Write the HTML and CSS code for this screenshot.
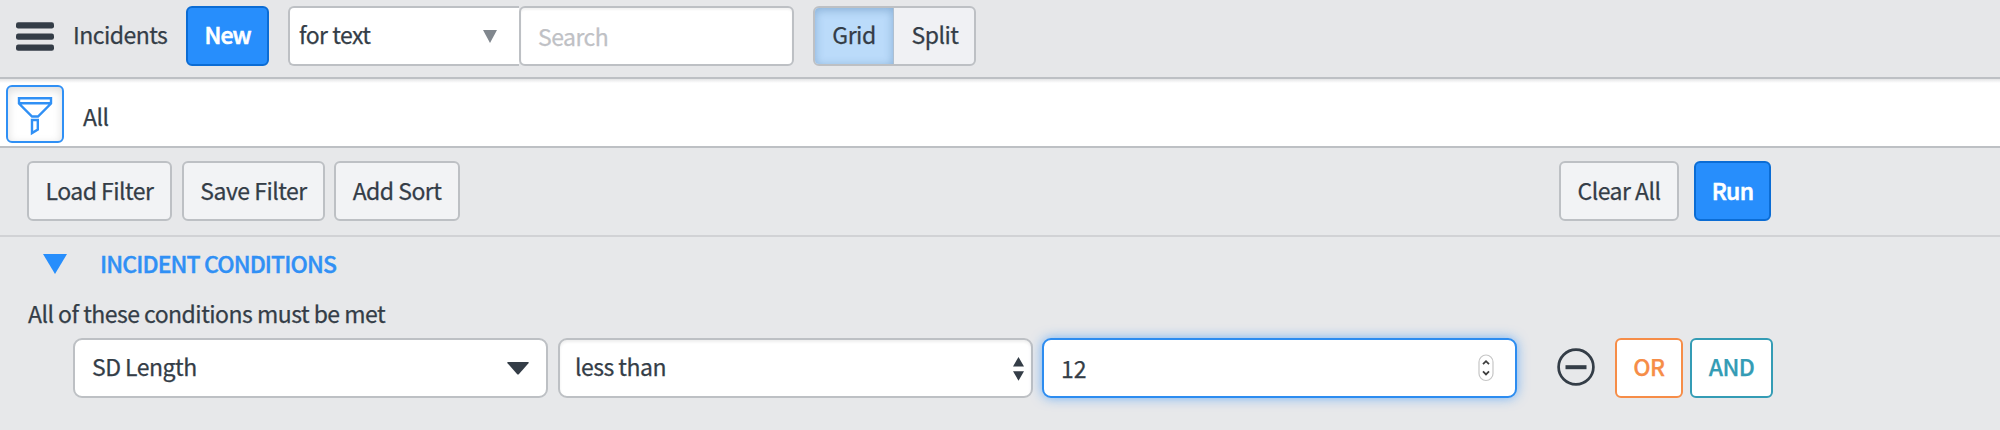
FILE: index.html
```html
<!DOCTYPE html>
<html lang="en">
<head>
<meta charset="utf-8">
<title>Incidents</title>
<link rel="stylesheet" href="styles.css">
</head>
<body>
<header class="toolbar">
  <svg class="menu" width="38" height="30" viewBox="0 0 38 30"><g fill="#343d47"><rect y="0.3" width="38" height="6.2" rx="2.2"/><rect y="11.5" width="38" height="6.2" rx="2.2"/><rect y="22.6" width="38" height="6.2" rx="2.2"/></g></svg>
  <span class="title">Incidents</span>
  <div class="btn primary new">New</div>
  <div class="search-group">
    <div class="kind"><span>for text</span><svg width="14" height="13" viewBox="0 0 14 13"><path d="M0 0H14L7 13Z" fill="#81878e"/></svg></div>
    <div class="search">Search</div>
  </div>
  <div class="toggle">
    <div class="grid">Grid</div>
    <div class="split">Split</div>
  </div>
</header>
<nav class="crumbs">
  <div class="funnel"><svg width="36" height="40" viewBox="0 0 36 40" fill="none" stroke="#3090f5" stroke-width="2.4"><path d="M2 2.2H34V7.5L21 20.5H15L2 7.5ZM2 7.2H34"/><path d="M15 24H20.8V33.5L15 37Z"/></svg></div>
  <span>All</span>
</nav>
<section class="actions">
  <div class="btn load">Load Filter</div>
  <div class="btn save">Save Filter</div>
  <div class="btn sort">Add Sort</div>
  <div class="btn clear">Clear All</div>
  <div class="btn primary run">Run</div>
</section>
<main class="conditions">
  <div class="heading">
    <svg width="24" height="20" viewBox="0 0 24 20"><path d="M0 0H24L12 20Z" fill="#278efc"/></svg>
    <span>INCIDENT CONDITIONS</span>
  </div>
  <p class="hint">All of these conditions must be met</p>
  <div class="row">
    <div class="field"><span>SD Length</span><svg class="caret" width="22" height="13" viewBox="0 0 22 13"><path d="M1 0H21Q22.5 0 21.5 1.2L12 12Q11 13 10 12L0.5 1.2Q-0.5 0 1 0Z" fill="#343d47"/></svg></div>
    <div class="field operator"><span>less than</span><svg class="updown" width="11" height="24" viewBox="0 0 11 24"><path d="M0 9.5L5.5 0L11 9.5ZM0 14.2H11L5.5 23.7Z" fill="#343d47"/></svg></div>
    <div class="field value"><span>12</span><svg class="stepper" width="16" height="28" viewBox="0 0 16 28" fill="none"><rect x="1" y="1" width="14" height="25.5" rx="7" stroke="#c6c6c6" stroke-width="1.2" fill="#fff"/><path d="M5 10.2L8 7.2L11 10.2M5 17.4L8 20.4L11 17.4" stroke="#3e3e3e" stroke-width="1.8"/></svg></div>
    <svg class="remove" width="38" height="38" viewBox="0 0 38 38"><circle cx="19" cy="19" r="17.4" fill="none" stroke="#343d47" stroke-width="2.7"/><rect x="8.5" y="17.2" width="21" height="4" fill="#343d47"/></svg>
    <div class="logic or">OR</div>
    <div class="logic and">AND</div>
  </div>
</main>
</body>
</html>
```
FILE: styles.css
```css
* { box-sizing: border-box; }
body {
  margin: 0;
  width: 2000px;
  height: 430px;
  overflow: hidden;
  background: #e7e8ea;
  color: #343d47;
  font: 23px/30px "Noto Sans CJK SC", "Noto Sans", sans-serif;
  letter-spacing: -0.52px;
  -webkit-text-stroke: 0.25px currentColor;
  white-space: nowrap;
}
svg { display: block; flex: none; }
.toolbar {
  display: flex;
  height: 79px;
  padding: 6px 0 0 16px;
  background: #e6e7e9;
  border-bottom: 2px solid #bdc0c4;
}
.menu { margin-top: 16px; }
.title { width: 113px; margin: 13px 0 0 19px; }
.btn {
  display: flex;
  align-items: center;
  justify-content: center;
  height: 60px;
  padding-bottom: 3px;
  background: #f2f3f5;
  border: 2px solid #bdc0c4;
  border-radius: 6px;
}
.primary {
  background: #278efc;
  border-color: #0b6cd4;
  color: #fff;
  font-weight: 500;
  -webkit-text-stroke-width: 0.6px;
}
.new { width: 83px; padding-bottom: 4px; letter-spacing: -1px; }
.search-group { display: flex; margin-left: 19px; }
.kind {
  display: flex;
  align-items: center;
  justify-content: space-between;
  width: 231px;
  height: 60px;
  padding: 0 22px 4px 9px;
  background: #fff;
  border: 2px solid #bdc0c4;
  border-right: 0;
  border-radius: 6px 0 0 6px;
}
.kind svg { margin-top: 5px; }
.search {
  display: flex;
  align-items: center;
  width: 275px;
  height: 60px;
  padding-left: 17px;
  background: #fff;
  border: 2px solid #bdc0c4;
  border-radius: 6px;
  box-shadow: inset 0 2px 2px rgba(0, 0, 0, 0.05);
  color: #bfc1c5;
}
.toggle {
  display: flex;
  width: 163px;
  height: 60px;
  margin-left: 19px;
  border: 2px solid #bdc0c4;
  border-radius: 6px;
  overflow: hidden;
  background: #f0f1f4;
}
.grid, .split { display: flex; align-items: center; justify-content: center; padding-bottom: 4px; }
.grid {
  width: 79px;
  background: #bbdbfa;
  border-right: 1px solid #aebfd0;
  box-shadow: inset 0 2px 10px rgba(60, 110, 160, 0.4);
}
.split { flex: 1; padding-left: 2px; }
.crumbs {
  display: flex;
  align-items: flex-start;
  height: 69px;
  padding: 6px 0 0 6px;
  background: linear-gradient(#e4e5e6, #fff 4px);
  border-bottom: 2px solid #bdc0c4;
}
.crumbs > span { margin: 16px 0 0 19px; }
.funnel {
  width: 58px;
  height: 58px;
  padding: 9px 0 0 9px;
  border: 2px solid #3090f5;
  border-radius: 6px;
  box-shadow: inset 0 3px 10px rgba(0, 0, 0, 0.14);
  background: #fff;
}
.actions {
  display: flex;
  width: 2000px;
  height: 89px;
  padding: 13px 0 0 27px;
  border-bottom: 2px solid #d1d2d5;
}
.load { width: 145px; }
.save { width: 143px; margin-left: 10px; }
.sort { width: 126px; margin-left: 9px; }
.clear { width: 120px; margin-left: 1099px; }
.run { width: 77px; margin-left: 15px; letter-spacing: -0.7px; }
.heading {
  display: flex;
  height: 53px;
  padding: 11px 0 0 43px;
  color: #3090f5;
  font-weight: 500;
  letter-spacing: -0.88px;
  -webkit-text-stroke-width: 0.4px;
}
.heading svg { margin: 6px 33px 0 0; }
.hint { height: 48px; margin: 0; padding: 8px 0 0 28px; }
.row { display: flex; padding-left: 73px; }
.field {
  display: flex;
  align-items: center;
  justify-content: space-between;
  width: 475px;
  height: 60px;
  padding: 0 17px 4px;
  background: #fff;
  border: 2px solid #bdc0c4;
  border-radius: 9px;
}
.operator { margin-left: 10px; padding: 0 7px 4px 15px; box-shadow: inset 0 2px 3px rgba(0, 0, 0, 0.07); }
.value {
  width: 475px;
  margin-left: 9px;
  padding: 0 21px 0 17px;
  border-color: #2c8cf0;
  box-shadow: 0 0 12px rgba(39, 142, 252, 0.6);
  letter-spacing: 0;
}
.caret, .updown { margin-top: 5px; }
.remove { margin: 10px 0 0 40px; }
.logic {
  display: flex;
  align-items: center;
  justify-content: center;
  height: 60px;
  padding-bottom: 4px;
  background: #fff;
  border: 2px solid;
  border-radius: 6px;
  font-weight: 500;
}
.or { width: 68px; margin-left: 20px; color: #f68d48; }
.and { width: 83px; margin-left: 7px; color: #349cb5; }
```
